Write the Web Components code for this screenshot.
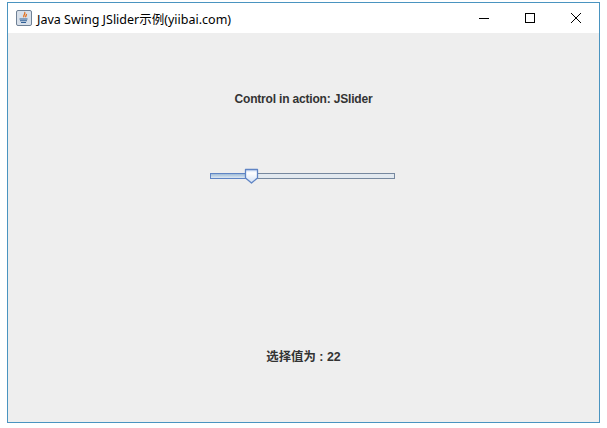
<!DOCTYPE html>
<html>
<head>
<meta charset="utf-8">
<title>Java Swing JSlider示例(yiibai.com)</title>
<style>
  html, body { margin: 0; background: #fff; }
  body { padding: 2px 7px 5px 7px; width: 593px; height: 421px; box-sizing: content-box; }
  .caption { padding-top: 2px; font-size: 12px; letter-spacing: -0.18px; }
  .result { padding-bottom: 3px; font-size: 12.4px; }
</style>
</head>
<body>
<swing-window title="Java Swing JSlider示例(yiibai.com)">
  <swing-label class="caption">Control in action: JSlider</swing-label>
  <swing-slider value="22"></swing-slider>
  <swing-label class="result">选择值为 : 22</swing-label>
</swing-window>

<script>
class SwingWindow extends HTMLElement {
  constructor() {
    super();
    this.attachShadow({ mode: "open" });
  }
  connectedCallback() {
    this.shadowRoot.innerHTML = `
      <style>
        :host {
          display: flex;
          flex-direction: column;
          box-sizing: border-box;
          width: 593px;
          height: 421px;
          border: 1px solid #4a94c0;
          font-family: "Liberation Sans", "Noto Sans CJK SC", sans-serif;
        }
        .bar {
          display: flex;
          align-items: center;
          height: 30px;
          flex: none;
          background: #fff;
        }
        .logo { width: 16px; height: 16px; margin-left: 8px; flex: none; }
        .title {
          margin-left: 5px;
          flex: 1;
          font: 12.5px "Noto Sans", "Noto Sans CJK SC", sans-serif;
          color: #000;
          white-space: nowrap;
        }
        .btn { width: 46px; height: 30px; display: flex; align-items: center; justify-content: center; flex: none; }
        .btn svg { width: 12px; height: 12px; }
        .content {
          flex: 1;
          display: grid;
          grid-template-rows: repeat(3, 1fr);
          background: #eeeeee;
        }
      </style>
      <div class="bar">
        <svg class="logo" viewBox="0 0 16 16">
          <rect x="0.5" y="0.5" width="15" height="15" rx="1.5" fill="#d8e0ea" stroke="#6f8196"/>
          <path d="M8.500 2c1.800 1.600-1.800 2.800-.6 5.200M10.300 4c.7 1.100-1.100 1.700-.5 3.200" fill="none" stroke="#e2701f" stroke-width="1.300"/>
          <path d="M3.500 9h8M4 10.800h7M5 12.500h5" fill="none" stroke="#2f5f96" stroke-width="1.100"/>
        </svg>
        <span class="title">${this.getAttribute("title") || ""}</span>
        <span class="btn"><svg viewBox="0 0 12 12"><path d="M1 6.500h10" stroke="#000" stroke-width="1"/></svg></span>
        <span class="btn"><svg viewBox="0 0 12 12"><rect x="1.500" y="1.500" width="9" height="9" fill="none" stroke="#000"/></svg></span>
        <span class="btn"><svg viewBox="0 0 12 12"><path d="M1 1l10 10M11 1L1 11" stroke="#000" stroke-width="1"/></svg></span>
      </div>
      <div class="content"><slot></slot></div>
    `;
  }
}

class SwingLabel extends HTMLElement {
  constructor() {
    super();
    this.attachShadow({ mode: "open" });
    this.shadowRoot.innerHTML = `
      <style>
        :host {
          display: flex;
          align-items: center;
          justify-content: center;
          font: bold 12px "Liberation Sans", "Noto Sans CJK SC", sans-serif;
          color: #333;
        }
      </style>
      <slot></slot>
    `;
  }
}

class SwingSlider extends HTMLElement {
  constructor() {
    super();
    this.attachShadow({ mode: "open" });
  }
  connectedCallback() {
    const value = Number(this.getAttribute("value") || 0);
    this.shadowRoot.innerHTML = `
      <style>
        :host { display: flex; justify-content: center; align-items: flex-start; padding: 6px 2px 0 0; }
        .track {
          position: relative;
          box-sizing: border-box;
          width: 185px;
          height: 6px;
          margin-top: 4px;
          border: 1px solid #76889f;
          background: #e2e9f0;
        }
        .fill {
          height: 100%;
          width: ${value}%;
          background: linear-gradient(#9fbcd8, #dce7f2);
          outline: 1px solid #5f84c4;
        }
        svg { position: absolute; left: 33px; top: -6px; width: 15px; height: 16px; }
      </style>
      <div class="track">
        <div class="fill"></div>
        <svg viewBox="0 0 15 16">
          <defs>
            <linearGradient id="g" x1="0" y1="0" x2="0" y2="1">
              <stop offset="0" stop-color="#c9daf4"/>
              <stop offset="0.25" stop-color="#ffffff"/>
              <stop offset="1" stop-color="#cfdef4"/>
            </linearGradient>
          </defs>
          <path d="M1.500 1.500h12v8.500l-6 5-6-5z" fill="url(#g)" stroke="#5f84c4" stroke-width="1.300" stroke-linejoin="round"/>
        </svg>
      </div>
    `;
  }
}

customElements.define("swing-window", SwingWindow);
customElements.define("swing-label", SwingLabel);
customElements.define("swing-slider", SwingSlider);
</script>
</body>
</html>
